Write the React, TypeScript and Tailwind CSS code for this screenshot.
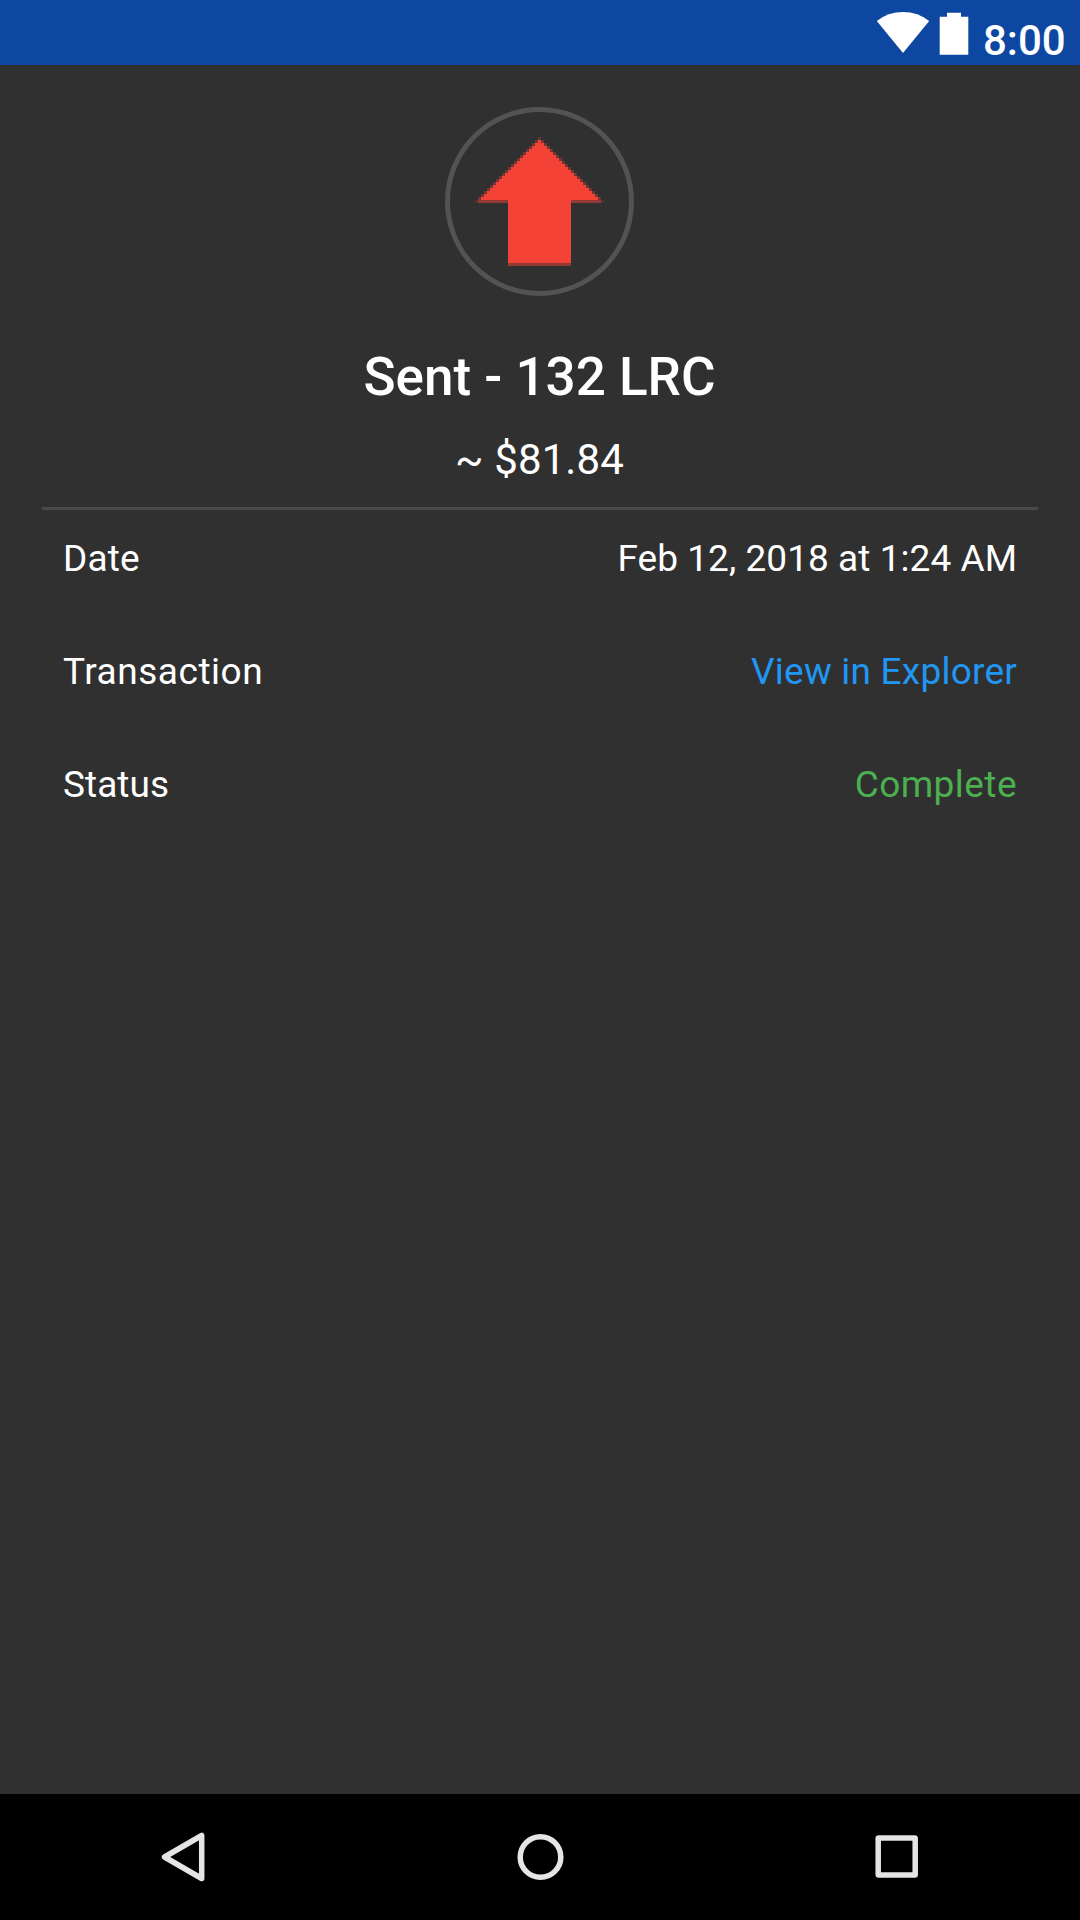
const rows = [
  { label: 'Date', labelClass: 'tracking-[0.2px]', value: 'Feb 12, 2018 at 1:24 AM', valueClass: 'text-white tracking-[0.05px]' },
  { label: 'Transaction', labelClass: 'tracking-[0.53px]', value: 'View in Explorer', valueClass: 'text-[#2196f3] tracking-[0.22px]' },
  { label: 'Status', labelClass: 'tracking-[0.05px]', value: 'Complete', valueClass: 'text-[#4caf50] tracking-[0.45px]' },
];

const steps = Array.from({ length: 20 }, (_, i) => i);

export default function App() {
  return (
    <div className="flex h-[1920px] w-[1080px] flex-col overflow-hidden bg-[#303030] font-['Roboto',sans-serif] text-white">
      <header className="flex h-[65px] shrink-0 bg-[#0d47a1]">
        <svg className="ml-[876px] h-[65px] w-[100px] shrink-0" viewBox="876 0 100 65" fill="#fff">
          <path d="M903 53 L876.800 21 Q888 12 903 12 Q918 12 929.200 21 Z" />
          <path d="M947 12.700h14v4h7.300v38h-28.600v-38h7.300z" />
        </svg>
        <span className="ml-[7px] mt-[16px] text-[42px] leading-[49px] font-medium">8:00</span>
      </header>
      <main className="flex flex-1 flex-col items-center px-[42px]">
        <svg className="mt-[41px] h-[190px] w-[190px]" viewBox="445 106 190 190">
          <circle cx="539.500" cy="201.500" r="92" fill="none" stroke="#535353" strokeWidth="5" />
          <g fill="#f44336" shapeRendering="crispEdges">
            {steps.map((i) => (
              <g key={i}>
                <rect x={538 - 3 * i} y={140 + 3 * i} width={3 + 6 * i} height="3" />
                <rect x={535 - 3 * i} y={140 + 3 * i} width="3" height="3" opacity="0.35" />
                <rect x={541 + 3 * i} y={140 + 3 * i} width="3" height="3" opacity="0.35" />
              </g>
            ))}
            <rect x="538" y="137" width="3" height="3" opacity="0.25" />
            <rect x="475" y="200" width="3" height="3" opacity="0.15" />
            <rect x="601" y="200" width="3" height="3" opacity="0.15" />
            <rect x="478" y="200" width="30" height="3" opacity="0.5" />
            <rect x="571" y="200" width="30" height="3" opacity="0.5" />
            <rect x="508" y="200" width="63" height="63" />
            <rect x="508" y="263" width="63" height="3" opacity="0.5" />
          </g>
        </svg>
        <h1 className="mt-[49px] mr-[1px] text-[53px] leading-[64px] font-medium">Sent - 132 LRC</h1>
        <p className="mt-[26px] mr-[1px] text-[42px] leading-[50px] tracking-[0.1px]">~ $81.84</p>
        <div className="mt-[22px] h-[3px] w-full bg-[#4a4a4a]" />
        <dl className="w-full px-[21px]">
          {rows.map((r) => (
            <div key={r.label} className="flex h-[113px] items-start justify-between pt-[27px] text-[37px] leading-[44px]">
              <dt className={r.labelClass}>{r.label}</dt>
              <dd className={r.valueClass}>{r.value}</dd>
            </div>
          ))}
        </dl>
      </main>
      <nav className="flex h-[126px] shrink-0 bg-black">
        <svg className="h-[126px] w-full" viewBox="0 1794 1080 126" fill="none" stroke="#e5e5e5" strokeWidth="5.500" strokeLinejoin="round">
          <path d="M201.700 1835.500V1878.500L164.500 1857Z" />
          <circle cx="540.500" cy="1857" r="20.300" />
          <rect x="878.200" y="1838" width="37" height="37" rx="0.500" />
        </svg>
      </nav>
    </div>
  );
}
